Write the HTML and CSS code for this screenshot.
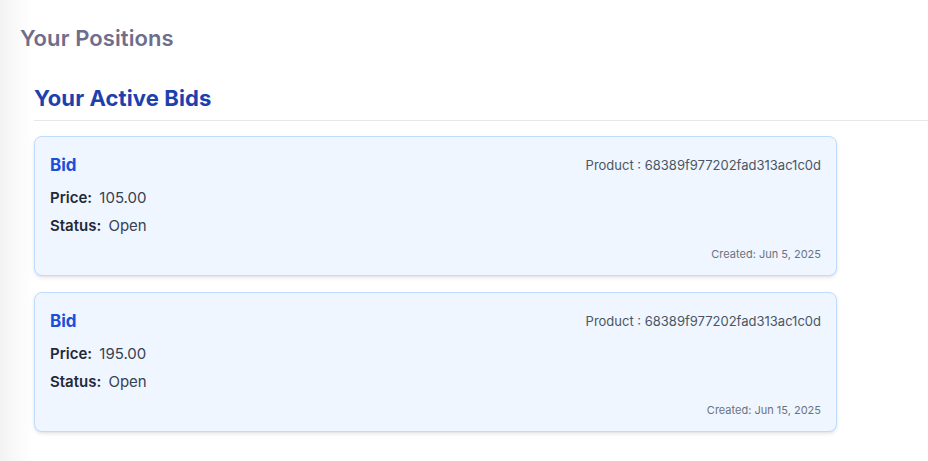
FILE: index.html
```html
<!DOCTYPE html>
<html>
<head>
<meta charset="utf-8">
<link rel="stylesheet" href="styles.css">
</head>
<body>
<main class="page">
  <h1 class="page-title">Your Positions</h1>
  <section class="section">
    <h2 class="section-title">Your Active Bids</h2>
    <div class="bid-list">
      <div class="bid-card">
        <div class="bid-head">
          <h3 class="bid-title">Bid</h3>
          <span class="bid-product">Product : 68389f977202fad313ac1c0d</span>
        </div>
        <p class="bid-row"><span class="bid-label">Price:</span> 105.00</p>
        <p class="bid-row"><span class="bid-label">Status:</span> Open</p>
        <div class="bid-created">Created: Jun 5, 2025</div>
      </div>
      <div class="bid-card">
        <div class="bid-head">
          <h3 class="bid-title">Bid</h3>
          <span class="bid-product">Product : 68389f977202fad313ac1c0d</span>
        </div>
        <p class="bid-row"><span class="bid-label">Price:</span> 195.00</p>
        <p class="bid-row"><span class="bid-label">Status:</span> Open</p>
        <div class="bid-created">Created: Jun 15, 2025</div>
      </div>
    </div>
  </section>
</main>
</body>
</html>
```
FILE: styles.css
```css
* { box-sizing: border-box; }
html, body { margin: 0; padding: 0; }
body {
  font-family: Inter, "Noto Sans", sans-serif;
  background: linear-gradient(to right, #f3f3f4 0px, #fafafa 18px, #ffffff 34px);
  color: #1f2937;
  min-height: 461px;
}
.page {
  padding: 23px 0 0 20px;
}
.page-title {
  margin: 0;
  font-size: 22px;
  line-height: 30px;
  font-weight: 600;
  color: #6e6e8c;
  letter-spacing: 0.1px;
}
.section {
  padding: 30px 0 0 14px;
}
.section-title {
  margin: 0;
  font-size: 22px;
  line-height: 30px;
  font-weight: 700;
  color: #1e40af;
  letter-spacing: 0.1px;
  padding-bottom: 7px;
  border-bottom: 1px solid #e5e7eb;
}
.bid-list {
  display: flex;
  flex-direction: column;
  gap: 16px;
  margin-top: 15px;
  width: 803px;
}
.bid-card {
  background: #eff6ff;
  border: 1px solid #bfdbfe;
  border-radius: 8px;
  padding: 15px 15px 14px 15px;
  box-shadow: 0 2px 4px rgba(0,0,0,0.08), 0 1px 2px rgba(0,0,0,0.05);
  height: 140px;
}
.bid-head {
  display: flex;
  justify-content: space-between;
  align-items: center;
  height: 26px;
}
.bid-title {
  margin: 0;
  font-size: 17px;
  font-weight: 700;
  color: #1d4ed8;
}
.bid-product {
  font-size: 13px;
  color: #4b5563;
}
.bid-row {
  margin: 0;
  font-size: 15px;
  line-height: 28px;
  color: #374151;
}
.bid-row:first-of-type { margin-top: 6px; }
.bid-label {
  font-weight: 600;
  color: #1f2937;
  margin-right: 3px;
}
.bid-created {
  margin-top: 7px;
  text-align: right;
  font-size: 11px;
  color: #6b7280;
}
```
